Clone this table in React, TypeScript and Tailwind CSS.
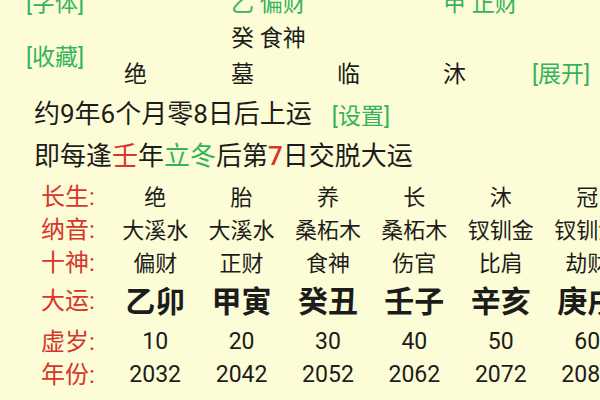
const cols = [
  { cs: '绝', ny: '大溪水', ss: '偏财', dy: '乙卯', age: '10', year: '2032' },
  { cs: '胎', ny: '大溪水', ss: '正财', dy: '甲寅', age: '20', year: '2042' },
  { cs: '养', ny: '桑柘木', ss: '食神', dy: '癸丑', age: '30', year: '2052' },
  { cs: '长', ny: '桑柘木', ss: '伤官', dy: '壬子', age: '40', year: '2062' },
  { cs: '沐', ny: '钗钏金', ss: '比肩', dy: '辛亥', age: '50', year: '2072' },
  { cs: '冠', ny: '钗钏金', ss: '劫财', dy: '庚戌', age: '60', year: '2082' },
];

type Key = 'cs' | 'ny' | 'ss' | 'dy' | 'age' | 'year';

const rows: { label: string; key: Key; h: string; cell: string }[] = [
  { label: '长生:', key: 'cs', h: 'h-[33px]', cell: 'text-[22px]' },
  { label: '纳音:', key: 'ny', h: 'h-[33px]', cell: 'text-[22px]' },
  { label: '十神:', key: 'ss', h: 'h-[33px]', cell: 'text-[22px]' },
  { label: '大运:', key: 'dy', h: 'h-[46px]', cell: 'text-[30px] font-bold' },
  { label: '虚岁:', key: 'age', h: 'h-[33px]', cell: 'text-[23px]' },
  { label: '年份:', key: 'year', h: 'h-[33px]', cell: 'text-[23px]' },
];

function Link({ children }: { children: string }) {
  return <span className="text-[23px] text-[#35b35c]">{children}</span>;
}

export default function App() {
  return (
    <div
      className="w-[600px] h-[400px] overflow-hidden bg-[#fcfcd6] text-[#1c1c1c]"
      style={{ fontFamily: 'Roboto, "Noto Sans CJK SC", sans-serif' }}
    >
      {/* 命盘上半部分 */}
      <div className="-mt-[14px] pl-[26px] grid grid-cols-[98px_107px_106px_106px_89px_auto] grid-rows-[35px_35px_37px] items-center whitespace-nowrap text-[23px] leading-none">
        <div className="row-start-1 col-start-1"><Link>[字体]</Link></div>
        <div className="row-start-1 col-start-3 text-[#35b35c]">乙 偏财</div>
        <div className="row-start-1 col-start-5 text-[#35b35c]">甲 正财</div>

        <div className="row-start-2 row-span-2 col-start-1"><Link>[收藏]</Link></div>
        <div className="row-start-2 col-start-3">癸 食神</div>

        <div className="row-start-3 col-start-2">绝</div>
        <div className="row-start-3 col-start-3">墓</div>
        <div className="row-start-3 col-start-4">临</div>
        <div className="row-start-3 col-start-5">沐</div>
        <div className="row-start-3 col-start-6"><Link>[展开]</Link></div>
      </div>

      <div className="pl-[34px] text-[26px] whitespace-nowrap">
        <div className="h-[42px] flex items-center">
          <span>约9年6个月零8日后上运</span>
          <span className="ml-[20px] relative top-[1px]"><Link>[设置]</Link></span>
        </div>
        <div className="h-[42px] flex items-center">
          <span>即每逢</span>
          <span className="text-[#d8352b]">壬</span>
          <span>年</span>
          <span className="text-[#35b35c]">立冬</span>
          <span>后第</span>
          <span className="text-[#d8352b] font-medium">7</span>
          <span>日交脱大运</span>
        </div>
      </div>

      {/* 大运表 */}
      <div className="mt-[2px] pl-[41px]">
        {rows.map(r => (
          <div key={r.key} className={`${r.h} grid grid-cols-[71px_repeat(6,86.4px)] items-center whitespace-nowrap`}>
            <div className="text-[24px] text-[#d8352b]">{r.label}</div>
            {cols.map((c, i) => (
              <div key={i} className={`${r.cell} text-center`}>{c[r.key]}</div>
            ))}
          </div>
        ))}
      </div>
    </div>
  );
}
